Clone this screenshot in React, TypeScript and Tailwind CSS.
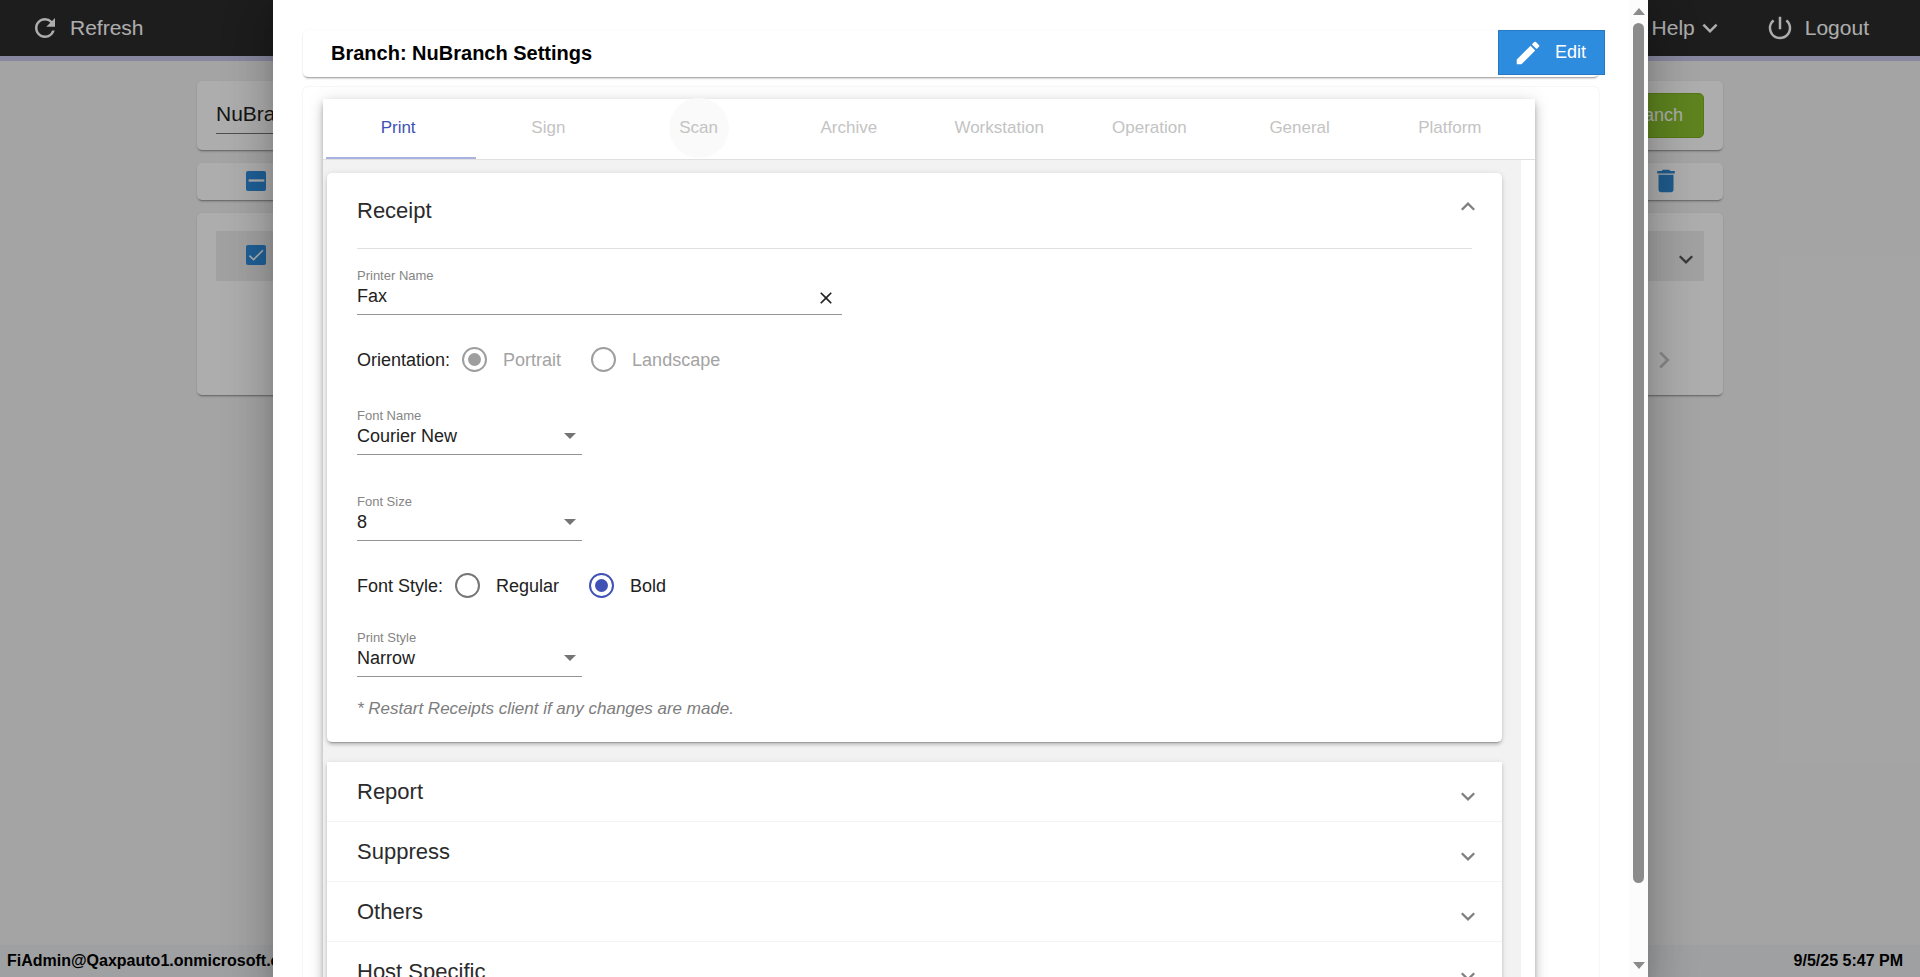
import type { ReactNode } from "react";
import {
  MdCheck,
  MdChevronRight,
  MdClose,
  MdDelete,
  MdEdit,
  MdKeyboardArrowDown,
  MdPowerSettingsNew,
  MdRefresh,
  MdRemove,
} from "react-icons/md";

const tabs = ["Print", "Sign", "Scan", "Archive", "Workstation", "Operation", "General", "Platform"];
const closedSections = ["Report", "Suppress", "Others", "Host Specific"];

function Chevron({ up = false }: { up?: boolean }) {
  return (
    <svg
      viewBox="0 0 24 24"
      className={up ? "size-6 rotate-180" : "size-6"}
      fill="none"
      stroke="currentColor"
      strokeWidth="2.3"
      aria-hidden="true"
    >
      <path d="M5.8 13.2 L12 19.4 L18.2 13.2" />
    </svg>
  );
}

function Check({ label, mixed = false }: { label: string; mixed?: boolean }) {
  return (
    <label className="relative block size-5">
      <input
        type="checkbox"
        defaultChecked
        aria-label={label}
        className="block size-5 appearance-none rounded-xs bg-[#2e8cde]"
      />
      <span className="pointer-events-none absolute inset-0 flex items-center justify-center text-white">
        {mixed ? <MdRemove size={27} className="shrink-0" /> : <MdCheck size={20} className="shrink-0" />}
      </span>
    </label>
  );
}

function SelectField({ id, label, value }: { id: string; label: string; value: string }) {
  return (
    <div className="relative w-[225px]">
      <label htmlFor={id} className="block text-[13px] leading-4 text-[#858585]">
        {label}
      </label>
      <select
        id={id}
        defaultValue={value}
        className="block h-[31px] w-full appearance-none border-b border-[#949494] bg-transparent pb-1.5 text-[18px] leading-6 text-[#212121] outline-none"
      >
        <option>{value}</option>
      </select>
      <svg viewBox="0 0 12 6" className="pointer-events-none absolute right-1.5 bottom-4 h-1.5 w-3" aria-hidden="true">
        <path d="M0 0 H12 L6 6 Z" fill="#757575" />
      </svg>
    </div>
  );
}

function Radio({
  name,
  label,
  checked = false,
  disabled = false,
}: {
  name: string;
  label: string;
  checked?: boolean;
  disabled?: boolean;
}) {
  return (
    <label className={disabled ? "flex items-center gap-4 text-[#a3a3a3]" : "flex items-center gap-4 text-[#212121]"}>
      <input
        type="radio"
        name={name}
        defaultChecked={checked}
        disabled={disabled}
        className="flex size-[25px] appearance-none items-center justify-center rounded-full border-2 border-[#757575] before:size-[13px] before:rounded-full checked:border-[#3f51b5] checked:before:bg-[#3f51b5] disabled:border-[#9e9e9e] disabled:checked:before:bg-[#9e9e9e]"
      />
      {label}
    </label>
  );
}

function RadioRow({ legend, children }: { legend: string; children: ReactNode }) {
  return (
    <div role="radiogroup" aria-label={legend} className="flex h-[25px] items-center text-[18px] leading-6 text-[#212121]">
      <span className="mr-3">{legend}</span>
      <div className="flex gap-[30px]">{children}</div>
    </div>
  );
}

const cardShadow =
  "shadow-[0_4px_1px_-3px_rgba(0,0,0,0.2),0_3px_3px_0_rgba(0,0,0,0.14),0_1px_6px_0_rgba(0,0,0,0.12)]";
const flatShadow = "shadow-[0_3px_1px_-2px_rgba(0,0,0,0.22),0_2px_2px_0_rgba(0,0,0,0.14),0_0_2px_0_rgba(0,0,0,0.06)]";

function BranchPage() {
  return (
    <div className="flex h-full flex-col bg-[#f2f2f2] text-[21px]">
      <header className="flex h-[61px] shrink-0 items-center justify-between border-b-5 border-[#c8c8ea] bg-[#2c2c2c] pr-[51px] pl-[30px] text-white">
        <button className="flex items-center gap-2.5">
          <MdRefresh size={30} />
          Refresh
        </button>
        <nav className="flex items-center gap-10">
          <button className="flex items-center">
            Help
            <MdKeyboardArrowDown size={30} />
          </button>
          <button className="flex items-center gap-2.5">
            <MdPowerSettingsNew size={30} />
            Logout
          </button>
        </nav>
      </header>
      <main className="flex flex-col gap-[13px] px-[197px] pt-5">
        <section className={`flex h-[69px] items-center justify-between rounded-[5px] bg-white px-[19px] ${flatShadow}`}>
          <input
            aria-label="Search branches"
            defaultValue="NuBranch"
            className="h-9 w-80 border-b border-[#757575] bg-transparent pb-0.5 text-[#212121] outline-none"
          />
          <button className="h-[45px] rounded-[5px] border border-[#7fae1f] bg-[#8bc22f] px-5 text-[18px] text-white">
            Add Branch
          </button>
        </section>
        <section
          className={`flex h-[37px] items-center justify-between rounded-[5px] bg-white pr-[42px] pb-0.5 pl-[49px] ${flatShadow}`}
        >
          <Check label="Select all branches" mixed />
          <button aria-label="Delete" className="text-[#2e86ce]">
            <MdDelete size={30} />
          </button>
        </section>
        <section className={`flex h-[182px] flex-col rounded-[5px] bg-white p-[18px] ${flatShadow}`}>
          <div className="mx-px flex h-[50px] items-center justify-between bg-[#ededed] pr-1.5 pb-0.5 pl-[30px]">
            <Check label="NuBranch" />
            <button aria-label="Expand" className="text-[#555555]">
              <Chevron />
            </button>
          </div>
          <div className="flex flex-1 items-end justify-end pr-6">
            <button aria-label="Next page" className="text-[#c8c8c8]">
              <MdChevronRight size={34} />
            </button>
          </div>
        </section>
      </main>
      <footer className="mt-auto flex h-8 items-center justify-between bg-[#eaecee] pr-[17px] pl-[7px] text-[16px] font-bold text-black">
        <span>FiAdmin@Qaxpauto1.onmicrosoft.com</span>
        <span>9/5/25 5:47 PM</span>
      </footer>
    </div>
  );
}

function ReceiptPanel() {
  return (
    <section className={`rounded-[5px] bg-white px-[30px] pb-[21px] ${cardShadow}`}>
      <button className="-mr-2 flex h-[75px] w-[calc(100%+8px)] items-center justify-between text-[22px] text-[#2b2b2b]">
        Receipt
        <span className="text-[#808080]">
          <Chevron up />
        </span>
      </button>
      <div className="border-t border-[#e0e0e0] pt-[19px]">
        <div className="w-[485px]">
          <label htmlFor="printer" className="block text-[13px] leading-4 text-[#858585]">
            Printer Name
          </label>
          <div className="flex h-[31px] items-start border-b border-[#949494] pr-1.5">
            <input
              id="printer"
              defaultValue="Fax"
              className="h-6 flex-1 bg-transparent text-[18px] leading-6 text-[#212121] outline-none"
            />
            <button aria-label="Clear" className="pt-1 text-[#212121]">
              <MdClose size={20} />
            </button>
          </div>
        </div>
        <div className="mt-8">
          <RadioRow legend="Orientation:">
            <Radio name="orientation" label="Portrait" checked disabled />
            <Radio name="orientation" label="Landscape" disabled />
          </RadioRow>
        </div>
        <div className="mt-9 flex flex-col gap-[39px]">
          <SelectField id="font-name" label="Font Name" value="Courier New" />
          <SelectField id="font-size" label="Font Size" value="8" />
        </div>
        <div className="mt-8 flex flex-col gap-8">
          <RadioRow legend="Font Style:">
            <Radio name="font-style" label="Regular" />
            <Radio name="font-style" label="Bold" checked />
          </RadioRow>
          <SelectField id="print-style" label="Print Style" value="Narrow" />
        </div>
        <p className="mt-5 text-[17px] leading-6 text-[#7d7d7d] italic">
          * Restart Receipts client if any changes are made.
        </p>
      </div>
    </section>
  );
}

function Scrollbar() {
  return (
    <div className="flex w-[19px] shrink-0 flex-col items-center justify-between bg-[#fcfcfc] pt-2 pb-2" aria-hidden="true">
      <svg viewBox="0 0 14 7" className="h-[7px] w-3.5 shrink-0">
        <path d="M7 0 L13 7 H1 Z" fill="#8b8b8b" />
      </svg>
      <div className="w-[11px] flex-1 pt-2 pb-1">
        <div className="h-[92%] rounded-full bg-[#8b8b8b]" />
      </div>
      <svg viewBox="0 0 14 7" className="h-[7px] w-3.5 shrink-0">
        <path d="M1 0 H13 L7 7 Z" fill="#8b8b8b" />
      </svg>
    </div>
  );
}

export default function App() {
  return (
    <div className="relative h-screen overflow-hidden font-['Liberation_Sans',Arial,sans-serif]">
      <BranchPage />
      <div className="absolute inset-0 flex bg-black/32 pr-[272px] pl-[273px]">
        <div
          role="dialog"
          aria-label="Branch: NuBranch Settings"
          className="flex min-w-0 flex-1 bg-white shadow-[0_11px_15px_-7px_rgba(0,0,0,0.2),0_24px_38px_3px_rgba(0,0,0,0.14),0_9px_46px_8px_rgba(0,0,0,0.12)]"
        >
          <div className="flex min-w-0 flex-1 flex-col gap-2.5 overflow-hidden px-[30px] pt-[30px]">
            <header
              className={`flex h-[47px] shrink-0 items-start justify-between rounded-[5px] bg-white pl-7 ${flatShadow}`}
            >
              <h1 className="text-[20px] leading-[46px] font-bold text-black">Branch: NuBranch Settings</h1>
              <button className="-mr-1.5 flex h-[45px] w-[107px] items-center gap-3 border border-[#2779c4] bg-[#2e8cde] pl-3.5 text-[18px] text-white">
                <MdEdit size={30} />
                Edit
              </button>
            </header>
            <div className="shrink-0 rounded-[5px] bg-white pt-3 pr-16 pl-5 shadow-[0_0_2px_0_rgba(0,0,0,0.12)]">
              <div className="bg-white shadow-[0_3px_5px_-1px_rgba(0,0,0,0.25),0_6px_10px_0_rgba(0,0,0,0.16),0_1px_16px_0_rgba(0,0,0,0.12)]">
                <div role="tablist" className="flex h-[61px] border-b border-[#e0e0e0] pr-2.5 text-[17px]">
                  {tabs.map((tab) => (
                    <button
                      key={tab}
                      role="tab"
                      aria-selected={tab === "Print"}
                      className={
                        tab === "Print"
                          ? "relative flex flex-1 basis-0 items-center justify-center pb-0.5 text-[#3f51b5]"
                          : "relative flex flex-1 basis-0 items-center justify-center pb-0.5 text-[#c3c3c3]"
                      }
                    >
                      {tab === "Print" && <span className="absolute bottom-0 left-[3px] h-0.5 w-full bg-[#a9b2de]" />}
                      {tab === "Scan" ? (
                        <span className="flex size-[60px] items-center justify-center rounded-full bg-[#fafafa]">{tab}</span>
                      ) : (
                        tab
                      )}
                    </button>
                  ))}
                </div>
                <div className="mr-3.5 bg-[#f2f2f2] pt-[13px] pr-[19px] pb-5 pl-1">
                  <ReceiptPanel />
                  <div className={`mt-5 bg-white ${cardShadow}`}>
                    {closedSections.map((title) => (
                      <button
                        key={title}
                        className="flex h-[60px] w-full items-center justify-between border-b border-[#f4f4f4] pr-[22px] pl-[30px] text-[22px] text-[#2b2b2b]"
                      >
                        {title}
                        <span className="text-[#808080]">
                          <Chevron />
                        </span>
                      </button>
                    ))}
                  </div>
                </div>
              </div>
            </div>
          </div>
          <Scrollbar />
        </div>
      </div>
    </div>
  );
}
